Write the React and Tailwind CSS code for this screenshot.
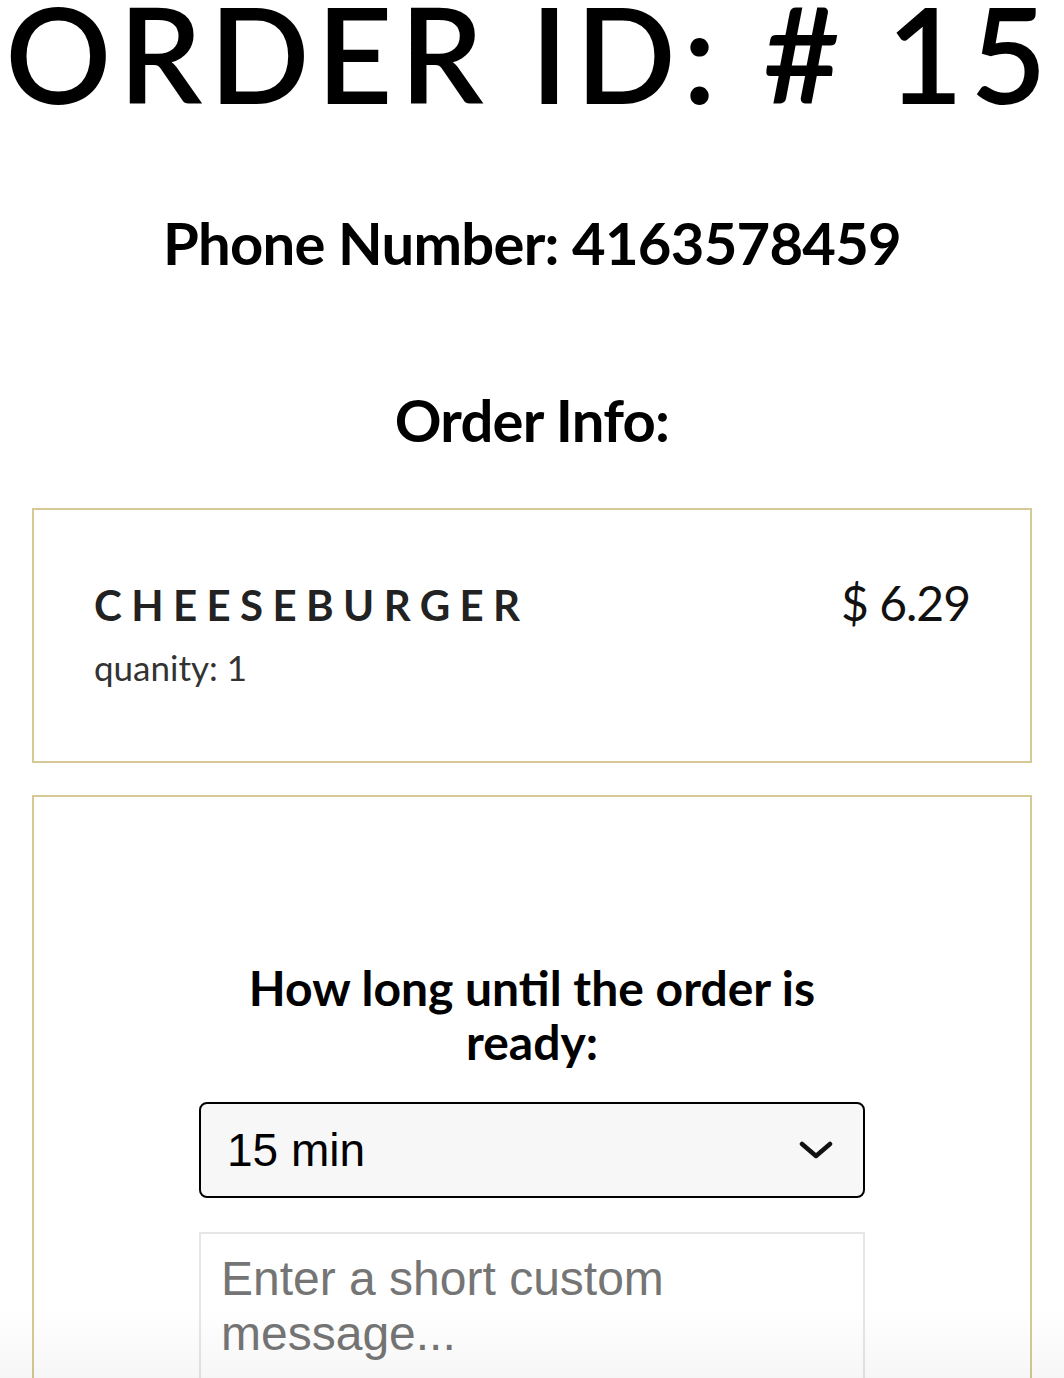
import React from "react";

export default function App() {
  return (
    <div className="relative h-[1378px] w-full overflow-hidden bg-white font-[Lato,sans-serif] text-black">
      <h1 className="whitespace-nowrap pr-[5px] text-center text-[132px] font-semibold leading-[106px] tracking-[7px]">
        ORDER ID: # 15
      </h1>
      <h2 className="mt-[101px] text-center text-[58px] font-bold leading-[72px] tracking-[-0.75px]">
        Phone Number: 4163578459
      </h2>
      <h2 className="mt-[105px] text-center text-[58px] font-bold leading-[72px] tracking-[-0.75px]">
        Order Info:
      </h2>

      <div className="mx-[32px] mt-[52px] flex items-start justify-between border-2 border-[#d6c995] px-[60px] pb-[73px] pt-[64px]">
        <div className="flex flex-col">
          <div className="mt-[6px] text-[42px] font-bold leading-[50px] tracking-[9.4px] text-[#222]">
            CHEESEBURGER
          </div>
          <div className="mt-[16px] text-[35px] leading-[42px] text-[#333]">
            quanity: 1
          </div>
        </div>
        <div className="text-[48px] leading-[58px] tracking-[-1px] text-[#111]">$ 6.29</div>
      </div>

      <div className="mx-[32px] mt-[32px] border-2 border-b-0 border-[#d6c995] pb-[40px] pt-[164px]">
        <div className="mx-auto flex w-[666px] flex-col">
          <h3 className="text-center text-[48px] font-bold leading-[54px]">
            How long until the order is ready:
          </h3>
          <div className="mt-[33px] flex h-[96px] items-center justify-between rounded-[8px] border-2 border-black bg-[#f7f7f7] pl-[26px] pr-[30px] font-['Liberation_Sans',Arial,sans-serif] text-[46px] text-black">
            <span>15 min</span>
            <svg width="34" height="20" viewBox="0 0 34 20" fill="none">
              <path d="M3 4 L17 16 L31 4" stroke="#111" strokeWidth="4.5" strokeLinecap="round" strokeLinejoin="round" />
            </svg>
          </div>
          <textarea
            className="mt-[34px] h-[260px] w-full resize-none border-2 border-[#e6e6e6] bg-white pl-[20px] pr-[21px] pt-[17px] font-['Liberation_Sans',Arial,sans-serif] text-[48px] leading-[55px] text-black outline-none placeholder:text-[#757575]"
            placeholder="Enter a short custom message..."
          />
        </div>
      </div>

      <div className="pointer-events-none absolute bottom-0 left-0 right-0 h-[70px] bg-linear-to-b from-transparent to-black/[0.035]" />
    </div>
  );
}
